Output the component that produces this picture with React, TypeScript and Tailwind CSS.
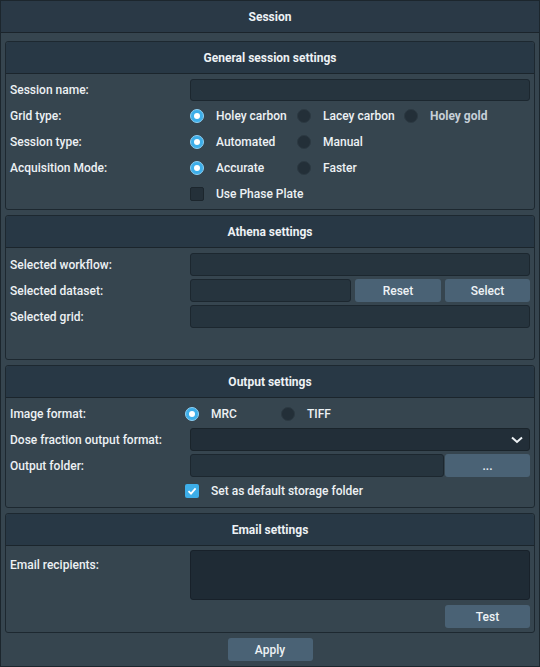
import React from 'react';

const font = { fontFamily: 'Roboto, "Liberation Sans", sans-serif' };

function Radio({ checked, label, muted }: { checked?: boolean; label: string; muted?: boolean }) {
  return (
    <div className="flex items-center gap-[12px] w-[107px]">
      {checked ? (
        <span className="w-[14px] h-[14px] rounded-full bg-[#3daee9] border border-[#8fd0f3] flex items-center justify-center shrink-0">
          <span className="w-[6px] h-[6px] rounded-full bg-white" />
        </span>
      ) : (
        <span className="w-[14px] h-[14px] rounded-full bg-[#232f38] border border-[#2c3942] shrink-0" />
      )}
      <span className={muted ? 'text-[#c6cfd8] font-bold' : ''}>{label}</span>
    </div>
  );
}

function Check({ checked, label }: { checked?: boolean; label: string }) {
  return (
    <div className="flex items-center gap-[12px]">
      {checked ? (
        <span className="w-[14px] h-[14px] rounded-[2px] bg-[#3daee9] flex items-center justify-center shrink-0">
          <svg width="10" height="10" viewBox="0 0 10 10">
            <path d="M1.5 5.2 L4 7.6 L8.6 2.4" fill="none" stroke="white" strokeWidth="1.8" />
          </svg>
        </span>
      ) : (
        <span className="w-[14px] h-[14px] rounded-[2px] bg-[#243039] border border-[#1c262d] shrink-0" />
      )}
      <span>{label}</span>
    </div>
  );
}

function Group({ title, children }: { title: string; children: React.ReactNode }) {
  return (
    <div className="border border-[#1d2830] rounded-[3px] flex flex-col">
      <div className="h-[32px] bg-[#283845] border-b border-[#1b252c] rounded-t-[3px] flex items-center justify-center font-bold">
        {title}
      </div>
      {children}
    </div>
  );
}

function Row({ label, children, h = 'h-[22px]' }: { label: string; children?: React.ReactNode; h?: string }) {
  return (
    <div className={`flex items-center ${h}`}>
      <div className="w-[180px] shrink-0">{label}</div>
      <div className="flex-1 flex items-center h-full">{children}</div>
    </div>
  );
}

const input = 'h-full flex-1 bg-[#26343e] border border-[#1c272f] rounded-[3px]';
const btn = 'h-full bg-[#4a6275] rounded-[3px] flex items-center justify-center text-[#eef2f5]';

export default function App() {
  return (
    <div style={font} className="w-[540px] h-[667px] bg-[#36454f] border border-[#1c262d] flex flex-col text-[12px] text-[#edf1f4] font-medium">
      <div className="h-[32px] shrink-0 bg-[#2a3946] border-b border-[#1b242b] flex items-center justify-center font-bold">
        Session
      </div>
      <div className="flex flex-col gap-[5px] px-[4px] pt-[8px]">
        <Group title="General session settings">
          <div className="flex flex-col gap-[4px] px-[4px] pt-[5px] pb-[4px]">
            <Row label="Session name:">
              <div className={input} />
            </Row>
            <Row label="Grid type:">
              <Radio checked label="Holey carbon" />
              <Radio label="Lacey carbon" />
              <Radio label="Holey gold" muted />
            </Row>
            <Row label="Session type:">
              <Radio checked label="Automated" />
              <Radio label="Manual" />
            </Row>
            <Row label="Acquisition Mode:">
              <Radio checked label="Accurate" />
              <Radio label="Faster" />
            </Row>
            <Row label="">
              <Check label="Use Phase Plate" />
            </Row>
          </div>
        </Group>

        <Group title="Athena settings">
          <div className="flex flex-col gap-[3px] px-[4px] pt-[5px] pb-[31px]">
            <Row label="Selected workflow:" h="h-[23px]">
              <div className={input} />
            </Row>
            <Row label="Selected dataset:" h="h-[23px]">
              <div className={input} />
              <div className={`${btn} w-[86px] ml-[4px]`}>Reset</div>
              <div className={`${btn} w-[85px] ml-[4px]`}>Select</div>
            </Row>
            <Row label="Selected grid:" h="h-[23px]">
              <div className={input} />
            </Row>
          </div>
        </Group>

        <Group title="Output settings">
          <div className="flex flex-col gap-[3px] px-[4px] pt-[5px] pb-[5px]">
            <Row label="Image format:">
              <div className="flex items-center gap-[12px] w-[96px] -ml-[5px]">
                <span className="w-[14px] h-[14px] rounded-full bg-[#3daee9] border border-[#8fd0f3] flex items-center justify-center">
                  <span className="w-[6px] h-[6px] rounded-full bg-white" />
                </span>
                <span>MRC</span>
              </div>
              <div className="flex items-center gap-[12px]">
                <span className="w-[14px] h-[14px] rounded-full bg-[#232f38] border border-[#2c3942]" />
                <span>TIFF</span>
              </div>
            </Row>
            <Row label="Dose fraction output format:" h="h-[23px]">
              <div className="h-full flex-1 bg-[#222e38] border border-[#1a242b] rounded-[3px] flex items-center justify-end pr-[6px]">
                <svg width="12" height="8" viewBox="0 0 12 8">
                  <path d="M1 1.5 L6 6 L11 1.5" fill="none" stroke="#eef2f5" strokeWidth="2" />
                </svg>
              </div>
            </Row>
            <Row label="Output folder:" h="h-[23px]">
              <div className={input} />
              <div className={`${btn} w-[85px] ml-[1px]`}>...</div>
            </Row>
            <Row label="">
              <div className="-ml-[5px]">
                <Check checked label="Set as default storage folder" />
              </div>
            </Row>
          </div>
        </Group>

        <Group title="Email settings">
          <div className="flex flex-col gap-[5px] px-[4px] pt-[4px] pb-[4px]">
            <div className="flex h-[50px]">
              <div className="w-[180px] shrink-0 pt-[6px]">Email recipients:</div>
              <div className="flex-1 bg-[#1f2b35] border border-[#18212a] rounded-[3px]" />
            </div>
            <div className="flex justify-end h-[23px]">
              <div className={`${btn} w-[85px]`}>Test</div>
            </div>
          </div>
        </Group>
      </div>
      <div className="flex justify-center pt-[5px]">
        <div className="h-[23px] w-[85px]">
          <div className={btn}>Apply</div>
        </div>
      </div>
    </div>
  );
}
